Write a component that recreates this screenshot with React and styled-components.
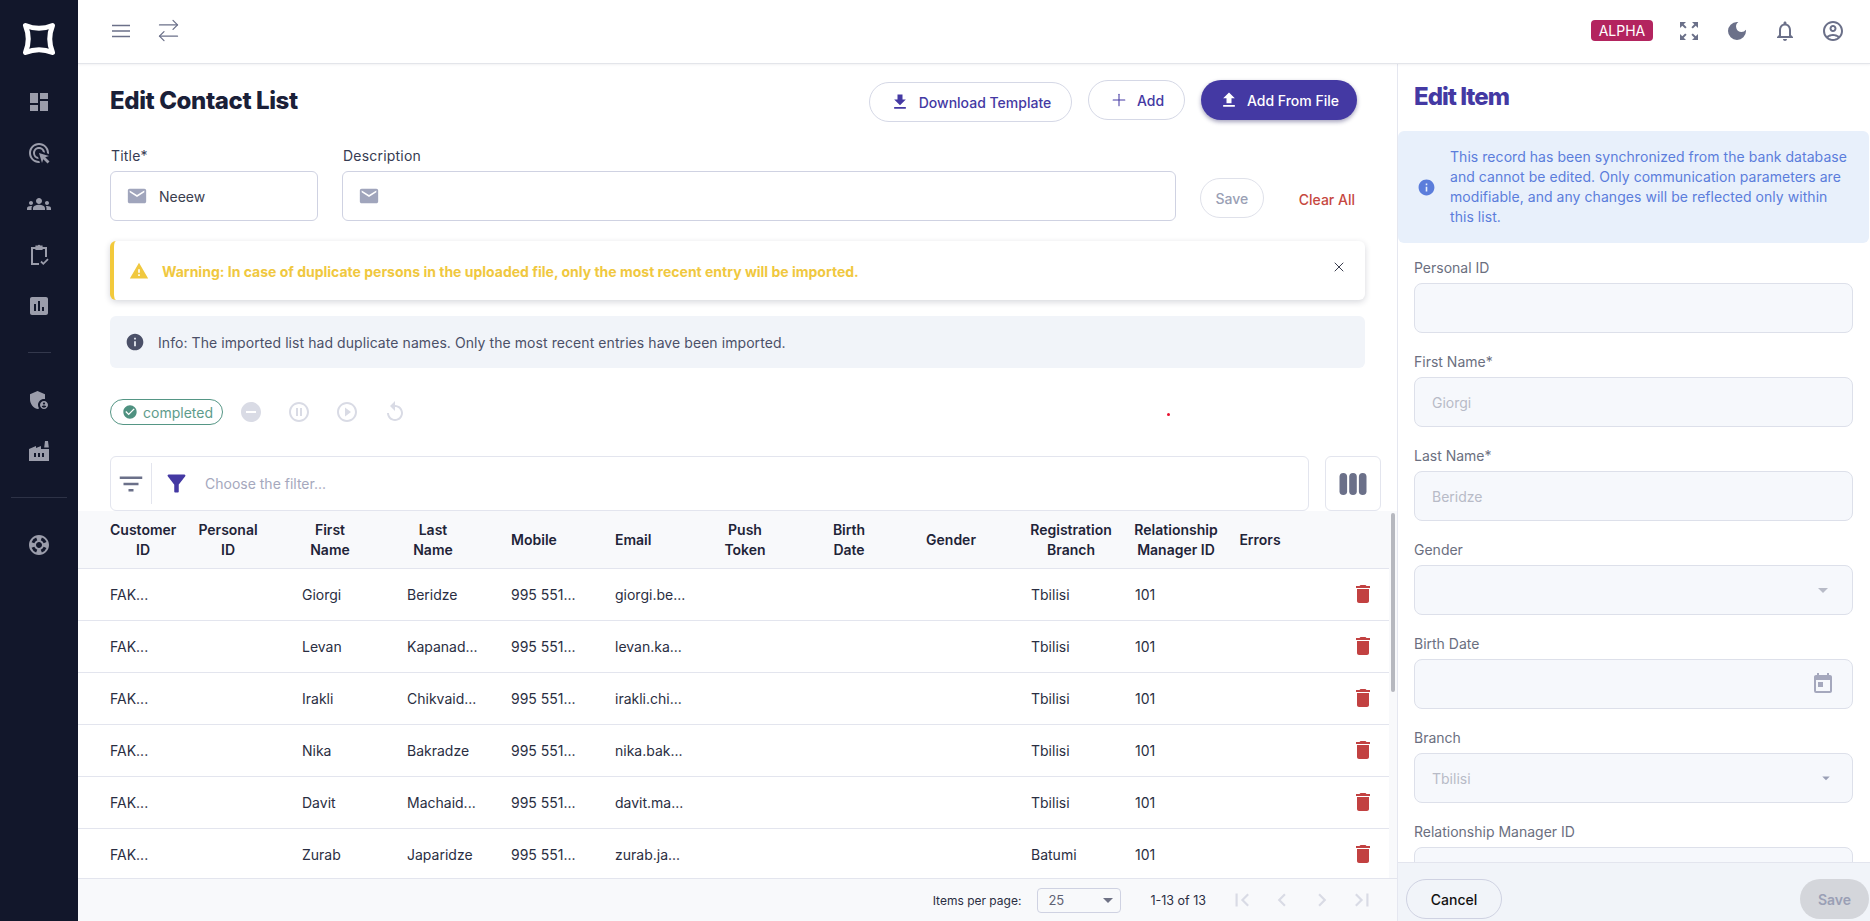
import React from "react";
import styled, { createGlobalStyle } from "styled-components";
import { ArrowRightLeft, Plus, X } from "lucide-react";
import {
  MdDashboard, MdAdsClick, MdGroups, MdAssessment, MdAdminPanelSettings, MdFactory, MdSupport,
  MdZoomOutMap, MdDarkMode, MdOutlineNotifications, MdOutlineAccountCircle, MdFileDownload, MdFileUpload,
  MdEmail, MdWarning, MdInfo, MdCheckCircle, MdDoNotDisturbOn, MdPauseCircleOutline, MdPlayCircleOutline,
  MdReplay, MdFilterList, MdFilterAlt, MdDelete, MdArrowDropDown, MdFirstPage, MdLastPage, MdChevronLeft,
  MdChevronRight, MdToday,
} from "react-icons/md";

const Global = createGlobalStyle`
  html, body { margin: 0; padding: 0; height: 100%; overflow: hidden; background: #fff; }
  body { font-family: Inter, "Liberation Sans", sans-serif; color: #1a2038; }
  * { box-sizing: border-box; }
`;

const Shell = styled.div`display: flex; width: 1870px; height: 921px; overflow: hidden;`;
const Sidebar = styled.aside`
  width: 78px; flex: none; background: #12172b; color: #9b9dab;
  display: flex; flex-direction: column; align-items: center; padding-top: 21px;
`;
const LogoBox = styled.div`height: 36px; margin-bottom: 19px; display: flex;`;
const NavButton = styled.div`height: 51px; width: 78px; display: flex; align-items: center; justify-content: center; flex: none;`;
const NavRule = styled.hr`
  border: 0; height: 1px; background: ${p => (p.$wide ? "#2d3246" : "#33384c")};
  width: ${p => (p.$wide ? "56px" : "23px")}; margin: 21px 0; flex: none;
`;
const Column = styled.div`flex: 1; min-width: 0; display: flex; flex-direction: column;`;
const TopBar = styled.header`
  height: 64px; flex: none; display: flex; align-items: center; padding: 0 25px 2px 34px;
  border-bottom: 1px solid #e3e5ea; box-shadow: 0 1px 2px rgba(30,35,60,.06); background: #fff; color: #6b7089; position: relative;
`;
const TopLeft = styled.div`display: flex; align-items: center; gap: 25px; flex: 1;`;
const TopRight = styled.div`display: flex; align-items: center; gap: 24px;`;
const AlphaBadge = styled.span`
  background: #b3245f; color: #fff; font-size: 14px; border-radius: 4px; height: 21px; width: 62px;
  display: flex; align-items: center; justify-content: center;
`;
const Body = styled.div`flex: 1; min-height: 0; display: flex;`;
const Main = styled.main`flex: none; width: 1319px; display: flex; flex-direction: column; position: relative; min-height: 0;`;
const StrayDot = styled.i`position: absolute; left: 1089px; top: 349px; width: 3px; height: 3px; border-radius: 50%; background: #e8102e;`;
const HeadRow = styled.div`display: flex; align-items: center; padding: 17px 40px 0 32px; height: 57px; flex: none;`;
const Heading = styled.h1`margin: 0; flex: 1; font-size: 24px; line-height: 40px; font-weight: 800; letter-spacing: -0.4px; color: #1a2038;`;
const Actions = styled.div`display: flex; align-items: flex-start; gap: 16px;`;
const PillButton = styled.button`
  font: 500 14px Inter, sans-serif; height: 40px; width: ${p => p.$w}px; border-radius: 20px; display: flex; align-items: center; justify-content: center; gap: ${p => p.$gap || 9}px;
  margin-top: ${p => p.$top || 0}px; padding: 0; cursor: pointer;
  background: ${p => (p.$solid ? "#4439a3" : "#fff")}; color: ${p => (p.$solid ? "#fff" : "#4439a3")};
  border: ${p => (p.$solid ? "0" : "1px solid #d5d8e6")};
  box-shadow: ${p => (p.$solid ? "0 2px 4px rgba(30,25,90,.4)" : "none")};
`;
const FormRow = styled.div`display: flex; align-items: flex-end; padding: 25px 42px 0 32px; gap: 24px; flex: none;`;
const FormField = styled.label`display: flex; flex-direction: column; gap: 5px; width: ${p => (p.$w ? p.$w + "px" : "auto")}; flex: ${p => (p.$w ? "none" : "1")};`;
const FormLabel = styled.span`font-size: 14px; line-height: 20px; letter-spacing: .2px; color: #363b52; padding-left: 1px;`;
const FormInput = styled.div`
  height: 50px; border: 1px solid #cfd2e2; border-radius: 6px; display: flex; align-items: center; padding-left: 15px; gap: 11px;
  font-size: 14px; color: #3a3d4e; background: #fff;
`;
const GhostSave = styled.button`
  font: 500 14px Inter, sans-serif; width: 64px; height: 40px; border-radius: 20px; border: 1px solid #dfe1ea; background: #fff; color: #9a9fb5; margin-bottom: 3px; padding: 0;
`;
const ClearAll = styled.span`font-size: 14px; font-weight: 500; color: #c6483f; margin: 0 0 13px 11px; white-space: nowrap;`;
const WarningBox = styled.div`
  margin: 20px 32px 0 32px; height: 59px; flex: none; border-left: 4px solid #f2c93b; border-radius: 6px; background: #fff;
  box-shadow: 0 2px 6px rgba(30,35,60,.18); display: flex; align-items: center; padding: 0 18px 0 15px; color: #f0c83f;
`;
const WarningText = styled.span`flex: 1; font-size: 14px; font-weight: 700; margin: 0 0 0 13px; padding-top: 1px;`;
const CloseMark = styled.span`color: #3a3d4e; display: flex; margin-bottom: 8px;`;
const InfoBox = styled.div`
  margin: 16px 32px 0 32px; height: 52px; flex: none; background: #f1f4f9; border-radius: 6px; display: flex; align-items: center; padding-left: 15px; gap: 13px;
  font-size: 14px; color: #4b5068; letter-spacing: .07px;
`;
const StatusRow = styled.div`display: flex; align-items: center; margin: 31px 0 0 32px; height: 26px; flex: none; color: #d9dbe5;`;
const StatusChip = styled.span`
  width: 113px; height: 26px; border: 1px solid #559685; border-radius: 13px; display: flex; align-items: center; justify-content: center; gap: 5px;
  font-size: 14px; color: #5e9c8c; margin-right: 4px; padding-left: 2px;
`;
const StatusIcon = styled.span`width: 48px; display: flex; justify-content: center; flex: none;`;
const FilterRow = styled.div`display: flex; gap: 16px; margin: 31px 16px 0 32px; height: 55px; flex: none;`;
const FilterBar = styled.div`
  flex: 1; border: 1px solid #e3e5ee; border-radius: 6px; display: flex; align-items: center; font-size: 14px; color: #a5a8bd; background: #fff;
`;
const FilterLeft = styled.span`width: 41px; height: 41px; border-right: 1px solid #e3e5ee; display: flex; align-items: center; justify-content: center; color: #6b7089;`;
const FilterFunnel = styled.span`color: #4439a3; display: flex; margin: 0 15px 0 11px;`;
const ColumnsButton = styled.div`width: 56px; border: 1px solid #e3e5ee; border-radius: 6px; display: flex; align-items: center; justify-content: center; color: #6b7089;`;
const TableArea = styled.div`flex: 1; min-height: 0; display: flex; overflow: hidden;`;
const Table = styled.div`flex: 1; min-width: 0;`;
const COLS = "88px 104px 105px 104px 104px 104px 104px 104px 104px 104px 104px 104px 1fr";
const HeadGrid = styled.div`
  display: grid; grid-template-columns: ${COLS}; padding: 1px 0 0 32px; height: 58px; align-items: center; background: #f8f9fb; border-bottom: 1px solid #e3e5ee;
`;
const HeadCell = styled.div`
  font-size: 14px; line-height: 20px; font-weight: 600; color: #1f2438; text-align: center; white-space: pre-line;
  width: ${p => p.$w}px; margin-left: ${p => p.$shift || 0}px;
`;
const RowGrid = styled.div`
  display: grid; grid-template-columns: ${COLS}; padding: 0 0 1px 32px; height: 52px; align-items: center; border-bottom: 1px solid #e3e5ee;
  font-size: 14px; color: #2a2e42;
`;
const Trash = styled.span`color: #c24141; display: flex; margin-left: 8px;`;
const Track = styled.div`width: 8px; flex: none; background: #f8f9fb; padding: 2px 2px 0;`;
const Thumb = styled.div`width: 4px; height: 179px; background: #b6b8bf; border-radius: 2px;`;
const Footer = styled.footer`
  height: 43px; flex: none; background: #f8f9fb; border-top: 1px solid #e3e5ee; display: flex; align-items: center; justify-content: flex-end; padding-right: 22px;
  color: #2a2e42;
`;
const PerPageLabel = styled.span`font-size: 12px;`;
const RangeLabel = styled.span`font-size: 12.5px;`;
const PerPage = styled.div`
  width: 84px; height: 25px; border: 1px solid #cfd2e2; border-radius: 4px; margin: 0 29px 0 16px; display: flex; align-items: center; padding-left: 10px; justify-content: space-between; font-size: 13px; color: #5f6274;
`;
const Pager = styled.div`display: flex; gap: 14px; margin-left: 23px; color: #d9dbe5;`;
const Panel = styled.aside`flex: 1; min-width: 0; border-left: 1px solid #e5e7f0; display: flex; flex-direction: column; background: #fff;`;
const PanelScroll = styled.div`flex: 1; min-height: 0; overflow: hidden; padding-top: 16px;`;
const PanelTitle = styled.h2`margin: 0 0 17px 16px; font-size: 24px; line-height: 34px; font-weight: 800; letter-spacing: -1px; color: #4439a3;`;
const Notice = styled.div`
  height: 112px; margin-right: 1px; background: #e8f0fb; border-radius: 6px; display: flex; align-items: center; padding: 0 18px 0 19px; gap: 14px;
  font-size: 14px; line-height: 20px; letter-spacing: .05px; color: #5b7ddb; margin-bottom: 15px;
`;
const NoticeIcon = styled(MdInfo)`flex: none;`;
const PanelField = styled.div`display: flex; flex-direction: column; gap: 5px; padding: 0 17px 0 16px; margin-bottom: 19px;`;
const PanelLabel = styled.span`font-size: 14px; line-height: 20px; color: #6b6f80;`;
const PanelInput = styled.div`
  height: 50px; flex: none; background: #f6f8fc; border: 1px solid #dde0ea; border-radius: 8px; display: flex; align-items: center; justify-content: space-between; padding: 0 17px; font-size: 14px; color: #b8bbc7;
`;
const PanelFoot = styled.div`height: 59px; flex: none; background: #f1f4f9; border-top: 1px solid #e3e5ee; display: flex; align-items: flex-end; justify-content: space-between; padding: 0 1px 2px 8px;`;
const CancelBtn = styled.button`font: 500 14px Inter, sans-serif; width: 96px; height: 40px; border-radius: 20px; border: 1px solid #cfd2e2; background: transparent; color: #111; padding: 0;`;
const SaveBtn = styled.button`font: 600 14px Inter, sans-serif; width: 69px; height: 40px; border-radius: 20px; border: 0; background: #d4d6db; color: #9a9fb5; padding: 0;`;

const Logo = () => (
  <svg width="36" height="36" viewBox="0 0 36 36" fill="none">
    <path d="M4.5 4.5 Q18 10 31.5 4.5 Q26 18 31.5 31.5 Q18 26 4.5 31.5 Q10 18 4.5 4.5Z" stroke="#fff" strokeWidth="5" strokeLinejoin="round" />
  </svg>
);
const Hamburger = () => (
  <svg width="18" height="14" viewBox="0 0 18 14" fill="none" stroke="currentColor" strokeWidth="1.3">
    <path d="M0 1.5h18M0 7h18M0 12.5h18" />
  </svg>
);
const ClipCheck = () => (
  <svg width="24" height="24" viewBox="0 0 24 24" fill="none" stroke="#9b9dab" strokeWidth="2">
    <path d="M9 5H5v16h7" />
    <path d="M15 5h4v9" />
    <path d="M9 3h6v3.4H9z" fill="#9b9dab" strokeWidth="1.2" />
    <circle cx="12" cy="2.8" r="1.1" fill="#9b9dab" stroke="none" />
    <path d="M14 18.5l2.3 2.3 4.7-4.7" strokeWidth="1.8" />
  </svg>
);
const ColumnsIcon = () => (
  <svg width="28" height="24" viewBox="0 0 28 24" fill="currentColor">
    <rect x="0.5" y="1" width="7.6" height="22" rx="3.8" />
    <rect x="10.2" y="1" width="7.6" height="22" rx="3.8" />
    <rect x="19.9" y="1" width="7.6" height="22" rx="3.8" />
  </svg>
);

const HEAD = [
  ["Customer\nID", 66], ["Personal\nID", 60], ["First\nName", 56], ["Last\nName", 52], ["Mobile", 46],
  ["Email", 36], ["Push\nToken", 52], ["Birth\nDate", 52], ["Gender", 50, -1], ["Registration\nBranch", 84, -2],
  ["Relationship\nManager ID", 84, -1], ["Errors", 42],
];
const ROWS = [
  ["Giorgi", "Beridze", "giorgi.be...", "Tbilisi"],
  ["Levan", "Kapanad...", "levan.ka...", "Tbilisi"],
  ["Irakli", "Chikvaid...", "irakli.chi...", "Tbilisi"],
  ["Nika", "Bakradze", "nika.bak...", "Tbilisi"],
  ["Davit", "Machaid...", "davit.ma...", "Tbilisi"],
  ["Zurab", "Japaridze", "zurab.ja...", "Batumi"],
];
const FIELDS = [
  ["Personal ID", ""], ["First Name*", "Giorgi"], ["Last Name*", "Beridze"], ["Gender", "", "drop"],
  ["Birth Date", "", "date"], ["Branch", "Tbilisi", "dropSmall"], ["Relationship Manager ID", ""],
];

export default function App() {
  return (
    <>
      <Global />
      <Shell>
        <Sidebar>
          <LogoBox><Logo /></LogoBox>
          <NavButton><MdDashboard size={24} /></NavButton>
          <NavButton><MdAdsClick size={24} /></NavButton>
          <NavButton><MdGroups size={24} /></NavButton>
          <NavButton><ClipCheck /></NavButton>
          <NavButton><MdAssessment size={24} /></NavButton>
          <NavRule />
          <NavButton><MdAdminPanelSettings size={24} /></NavButton>
          <NavButton><MdFactory size={24} /></NavButton>
          <NavRule $wide />
          <NavButton><MdSupport size={24} /></NavButton>
        </Sidebar>
        <Column>
          <TopBar>
            <TopLeft>
              <Hamburger />
              <ArrowRightLeft size={27} strokeWidth={1.1} />
            </TopLeft>
            <TopRight>
              <AlphaBadge>ALPHA</AlphaBadge>
              <MdZoomOutMap size={24} />
              <MdDarkMode size={24} />
              <MdOutlineNotifications size={24} />
              <MdOutlineAccountCircle size={24} />
            </TopRight>
          </TopBar>
          <Body>
            <Main>
              <StrayDot />
              <HeadRow>
                <Heading>Edit Contact List</Heading>
                <Actions>
                  <PillButton $w={203} $top={2}><MdFileDownload size={20} />Download Template</PillButton>
                  <PillButton $w={97} $gap={8}><Plus size={20} strokeWidth={1.25} />Add</PillButton>
                  <PillButton $w={156} $solid $gap={8}><MdFileUpload size={20} />Add From File</PillButton>
                </Actions>
              </HeadRow>
              <FormRow>
                <FormField $w={208}>
                  <FormLabel>Title*</FormLabel>
                  <FormInput><MdEmail size={22} color="#a0a5bc" />Neeew</FormInput>
                </FormField>
                <FormField>
                  <FormLabel>Description</FormLabel>
                  <FormInput><MdEmail size={22} color="#a0a5bc" /></FormInput>
                </FormField>
                <GhostSave>Save</GhostSave>
                <ClearAll>Clear All</ClearAll>
              </FormRow>
              <WarningBox>
                <MdWarning size={20} />
                <WarningText>Warning: In case of duplicate persons in the uploaded file, only the most recent entry will be imported.</WarningText>
                <CloseMark><X size={16} strokeWidth={1.5} /></CloseMark>
              </WarningBox>
              <InfoBox>
                <MdInfo size={20} />
                <span>Info: The imported list had duplicate names. Only the most recent entries have been imported.</span>
              </InfoBox>
              <StatusRow>
                <StatusChip><MdCheckCircle size={16} color="#4f9180" />completed</StatusChip>
                <StatusIcon><MdDoNotDisturbOn size={24} /></StatusIcon>
                <StatusIcon><MdPauseCircleOutline size={24} /></StatusIcon>
                <StatusIcon><MdPlayCircleOutline size={24} /></StatusIcon>
                <StatusIcon><MdReplay size={24} /></StatusIcon>
              </StatusRow>
              <FilterRow>
                <FilterBar>
                  <FilterLeft><MdFilterList size={30} /></FilterLeft>
                  <FilterFunnel><MdFilterAlt size={27} /></FilterFunnel>
                  Choose the filter...
                </FilterBar>
                <ColumnsButton><ColumnsIcon /></ColumnsButton>
              </FilterRow>
              <TableArea>
                <Table>
                  <HeadGrid>
                    {HEAD.map(([t, w, s]) => <HeadCell key={t} $w={w} $shift={s}>{t}</HeadCell>)}
                    <span />
                  </HeadGrid>
                  {ROWS.map(r => (
                    <RowGrid key={r[0]}>
                      <span>FAK...</span><span />
                      <span>{r[0]}</span><span>{r[1]}</span>
                      <span>995 551...</span><span>{r[2]}</span>
                      <span /><span /><span />
                      <span>{r[3]}</span><span>101</span><span />
                      <Trash><MdDelete size={24} /></Trash>
                    </RowGrid>
                  ))}
                </Table>
                <Track><Thumb /></Track>
              </TableArea>
              <Footer>
                <PerPageLabel>Items per page:</PerPageLabel>
                <PerPage>25<MdArrowDropDown size={24} color="#6f7285" /></PerPage>
                <RangeLabel>1-13 of 13</RangeLabel>
                <Pager>
                  <MdFirstPage size={26} /><MdChevronLeft size={26} /><MdChevronRight size={26} /><MdLastPage size={26} />
                </Pager>
              </Footer>
            </Main>
            <Panel>
              <PanelScroll>
                <PanelTitle>Edit Item</PanelTitle>
                <Notice>
                  <NoticeIcon size={19} />
                  <span>This record has been synchronized from the bank database and cannot be edited. Only communication parameters are modifiable, and any changes will be reflected only within this list.</span>
                </Notice>
                {FIELDS.map(([label, value, kind]) => (
                  <PanelField key={label}>
                    <PanelLabel>{label}</PanelLabel>
                    <PanelInput>
                      <span>{value}</span>
                      {kind === "drop" && <MdArrowDropDown size={24} color="#b8bbc7" />}
                      {kind === "dropSmall" && <MdArrowDropDown size={18} color="#9a9fb5" />}
                      {kind === "date" && <MdToday size={24} color="#a5a8bd" />}
                    </PanelInput>
                  </PanelField>
                ))}
              </PanelScroll>
              <PanelFoot>
                <CancelBtn>Cancel</CancelBtn>
                <SaveBtn>Save</SaveBtn>
              </PanelFoot>
            </Panel>
          </Body>
        </Column>
      </Shell>
    </>
  );
}
